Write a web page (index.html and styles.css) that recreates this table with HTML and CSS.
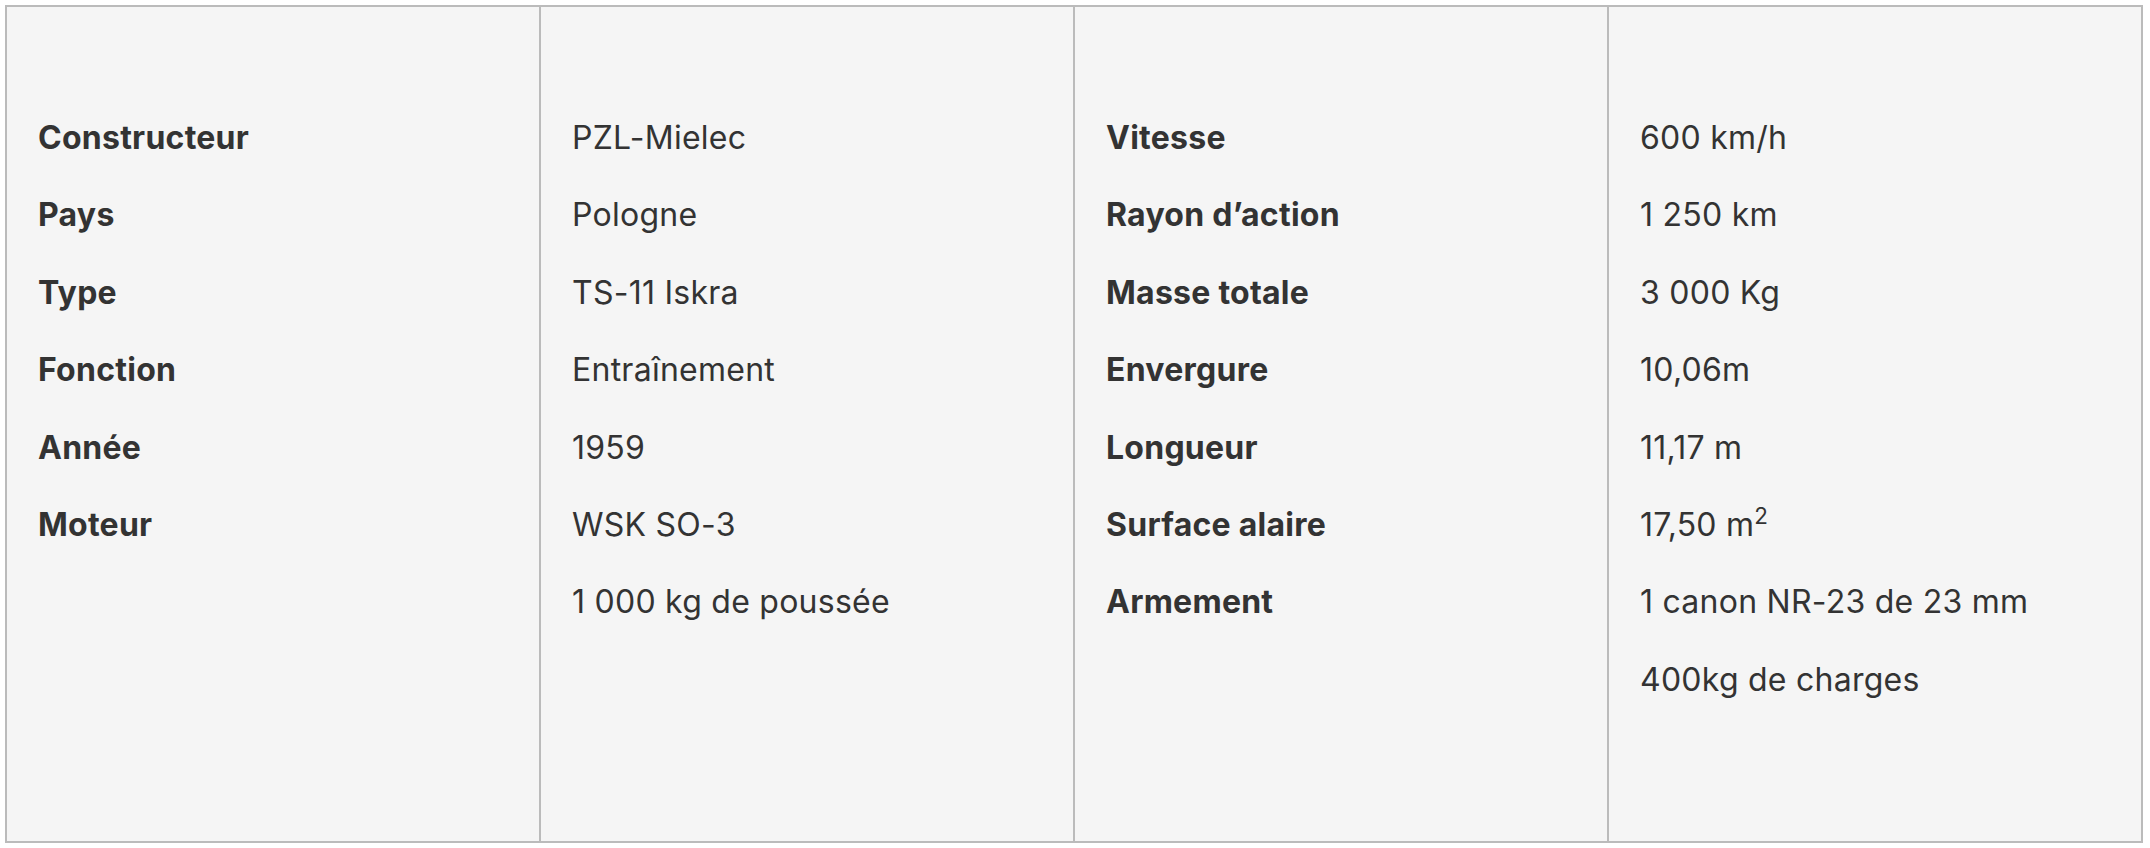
FILE: index.html
```html
<!DOCTYPE html>
<html lang="fr">
<head>
<meta charset="utf-8">
<title>TS-11 Iskra</title>
<link rel="stylesheet" href="styles.css">
</head>
<body>
<div class="specs">
  <div class="cell labels">
    <div class="line">Constructeur</div>
    <div class="line">Pays</div>
    <div class="line">Type</div>
    <div class="line">Fonction</div>
    <div class="line">Année</div>
    <div class="line">Moteur</div>
  </div>
  <div class="cell values">
    <div class="line">PZL-Mielec</div>
    <div class="line">Pologne</div>
    <div class="line">TS-11 Iskra</div>
    <div class="line">Entraînement</div>
    <div class="line">1959</div>
    <div class="line">WSK SO-3</div>
    <div class="line">1 000 kg de poussée</div>
  </div>
  <div class="cell labels">
    <div class="line">Vitesse</div>
    <div class="line">Rayon d’action</div>
    <div class="line">Masse totale</div>
    <div class="line">Envergure</div>
    <div class="line">Longueur</div>
    <div class="line">Surface alaire</div>
    <div class="line">Armement</div>
  </div>
  <div class="cell values">
    <div class="line">600 km/h</div>
    <div class="line">1 250 km</div>
    <div class="line">3 000 Kg</div>
    <div class="line">10,06m</div>
    <div class="line">11,17 m</div>
    <div class="line">17,50 m<sup>2</sup></div>
    <div class="line">1 canon NR-23 de 23 mm</div>
    <div class="line">400kg de charges</div>
  </div>
</div>
</body>
</html>
```

FILE: styles.css
```css
html, body {
  margin: 0;
  padding: 0;
  background: #ffffff;
}

body {
  padding: 5px;
  font-family: Inter, "Noto Sans", sans-serif;
  color: #333333;
}

.specs {
  display: grid;
  grid-template-columns: repeat(4, 1fr);
  gap: 2px;
  padding: 2px;
  background: #bbbbbb;
  width: 2134px;
  height: 834px;
}

.cell {
  background: #f5f5f5;
  padding: 108px 31px 0;
  display: flex;
  flex-direction: column;
  gap: 32.4px;
}

.line {
  font-size: 32px;
  line-height: 45px;
  letter-spacing: 0.25px;
}

.labels .line {
  font-weight: 700;
}

.values .line {
  font-weight: 400;
}

sup {
  font-size: 0.7em;
  line-height: 0;
  vertical-align: 0.55em;
}
```
